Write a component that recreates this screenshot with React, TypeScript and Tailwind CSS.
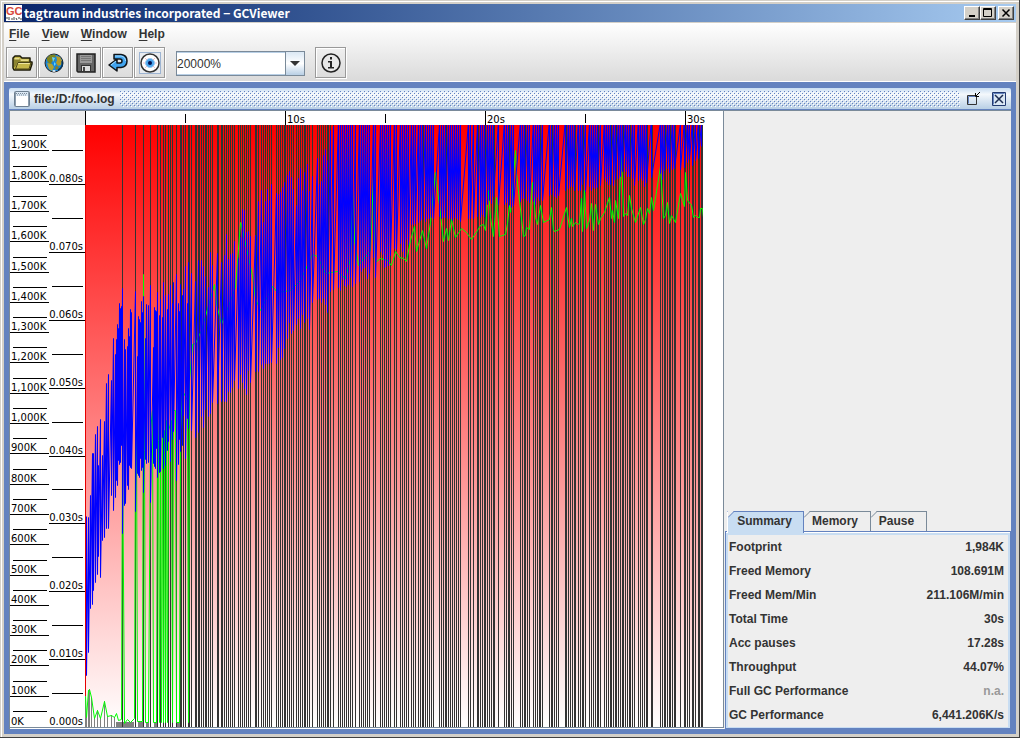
import React, { useState } from "react";

type Point = [number, number];

// x position of every collection that stopped the application, [x, width]
const pauses: Point[] = [
  [122, 1], [135, 1], [143, 1], [150, 1], [157, 1], [160, 1], [163, 1], [165, 1], [168, 1], [170, 1], [172, 1], [176, 1],
  [180, 2], [183, 1], [185, 1], [188, 2], [191, 1], [195, 2], [198, 2], [201, 1], [203, 1], [205, 2], [208, 1], [210, 1], [212, 1],
  [217, 2], [221, 2], [224, 1], [226, 1], [228, 1], [230, 1], [232, 1], [234, 1], [238, 1], [240, 1], [242, 1], [244, 1], [246, 1], [248, 1], [250, 1],
  [255, 2], [258, 1], [261, 1], [263, 1], [265, 1], [267, 1], [269, 1], [271, 1], [276, 1], [278, 1], [280, 1], [282, 1], [284, 2], [287, 1], [289, 1], [291, 1], [293, 1],
  [296, 1], [298, 1], [300, 1], [302, 1], [304, 2], [307, 1], [309, 1], [312, 1], [317, 1], [319, 1], [321, 1], [323, 1], [325, 1], [327, 2], [330, 1], [333, 1],
  [338, 1], [340, 1], [342, 1], [344, 1], [346, 1], [348, 1], [350, 1], [352, 1], [355, 1], [359, 1], [361, 1], [363, 1], [365, 1], [367, 1], [369, 1], [373, 1], [375, 1],
  [380, 1], [382, 1], [384, 1], [386, 1], [388, 1], [390, 1], [394, 1], [396, 1], [400, 1], [402, 1], [404, 1], [406, 1], [408, 1], [411, 1], [413, 1], [415, 1],
  [418, 1], [420, 1], [422, 2], [425, 1], [427, 1], [429, 1], [431, 1], [433, 1], [439, 1], [441, 1], [443, 1], [445, 2], [448, 1], [450, 1], [452, 1], [454, 1], [456, 1], [458, 1], [460, 1],
  [468, 1], [470, 1], [473, 1], [477, 2], [480, 1], [482, 1], [484, 2], [487, 1], [489, 1], [491, 1], [493, 2], [498, 1], [504, 1], [506, 1], [508, 2], [511, 1], [513, 1],
  [520, 1], [522, 1], [524, 2], [527, 1], [529, 1], [533, 1], [535, 1], [537, 1], [539, 2], [542, 1], [549, 1], [551, 2], [554, 1], [556, 1], [558, 1],
  [565, 2], [568, 1], [570, 1], [572, 1], [574, 2], [578, 1], [580, 1], [582, 2], [585, 1], [589, 1], [591, 1], [593, 1], [595, 1], [597, 2], [600, 1],
  [604, 1], [606, 1], [608, 1], [610, 2], [613, 1], [615, 2], [618, 1], [620, 1], [622, 2], [625, 1], [627, 1], [629, 2], [632, 1], [634, 1],
  [638, 1], [640, 1], [642, 1], [644, 1], [646, 2], [651, 2], [660, 1], [662, 1], [664, 2], [667, 1], [669, 2], [672, 1], [674, 2],
  [680, 1], [684, 2], [687, 1], [689, 1], [692, 2], [695, 1], [698, 2], [701, 2],
];

// [x, heap before, heap after] while the heap is still growing
const warmup: [number, number, number][] = [
  [86, 516, 675], [88, 517, 652], [90, 495, 608], [92, 453, 604], [93, 453, 590], [95, 434, 582], [97, 426, 574], [98, 465, 556],
  [100, 419, 577], [102, 455, 540], [104, 421, 537], [106, 383, 528], [108, 374, 528], [111, 380, 495], [113, 338, 510], [115, 354, 497],
  [116, 339, 480], [117, 324, 485], [118, 328, 460], [119, 303, 464], [120, 308, 462], [121, 306, 445], [122, 288, 533],
  [124, 339, 505], [125, 349, 503], [127, 346, 485], [128, 328, 489], [129, 336, 465], [130, 309, 467], [131, 312, 468],
  [135, 291, 511], [137, 356, 473], [138, 316, 475], [139, 319, 477], [140, 322, 458], [141, 301, 470], [142, 312, 467], [143, 296, 492],
  [145, 338, 459], [146, 304, 463], [148, 305, 462], [150, 285, 502], [153, 347, 463], [154, 307, 466], [155, 310, 468], [156, 311, 448],
  [157, 292, 477], [159, 315, 472], [160, 299, 471], [162, 317, 437], [163, 282, 468], [165, 295, 465], [167, 309, 450], [168, 294, 441],
  [170, 285, 461], [172, 303, 439], [173, 282, 431], [176, 274, 480], [178, 303, 464], [179, 311, 439],
  [180, 284, 451], [182, 295, 445], [183, 289, 415], [185, 266, 458], [187, 303, 418], [188, 262, 428],
];

const heapTop: Point[] = [
  [190, 268], [196, 255], [208, 250], [212, 234], [218, 251], [230, 222], [238, 234], [242, 190], [248, 210], [262, 187], [270, 174],
  [280, 178], [290, 155], [297, 170], [305, 148], [312, 160], [320, 148], [330, 126], [335, 118], [440, 120], [600, 118], [702, 118],
];

const heapBottom: Point[] = [
  [190, 430], [196, 453], [203, 434], [213, 408], [221, 421], [232, 397], [245, 396], [262, 378], [282, 366], [293, 334], [304, 337],
  [310, 330], [316, 312], [325, 322], [333, 310], [340, 295], [355, 295], [363, 291], [370, 281], [383, 273], [397, 263], [408, 259],
  [411, 226], [433, 219], [461, 221], [473, 221], [485, 217], [493, 202], [505, 211], [525, 207], [540, 203], [553, 200], [563, 193],
  [593, 194], [602, 186], [610, 189], [620, 178], [633, 186], [653, 186], [661, 181], [675, 172], [683, 173], [690, 168], [698, 167], [702, 152],
];

// duration of each collection
const gcTimes: Point[] = [
  [85, 696], [86, 717], [88, 690], [89, 689], [91, 697], [94, 718], [97, 710], [100, 718], [104, 701], [107, 716], [111, 715], [114, 717],
  [116, 713], [118, 720], [121, 719], [122, 440], [124, 723], [127, 719], [130, 722], [134, 718], [135, 430], [136, 430], [137, 721],
  [142, 721], [143, 274], [144, 450], [145, 722], [148, 722], [150, 430], [152, 410], [153, 722], [156, 722], [157, 420], [158, 440], [159, 722],
  [160, 430], [161, 722], [162, 430], [163, 722], [164, 430], [165, 722], [166, 420], [167, 722], [168, 430], [171, 420], [172, 722], [173, 410],
  [175, 410], [176, 722], [179, 722], [180, 430], [182, 390], [187, 400], [188, 722], [189, 380], [192, 344], [195, 343], [201, 330],
  [214, 284], [216, 303], [221, 324], [235, 287], [240, 222], [241, 225], [252, 275], [255, 298], [260, 310], [272, 286], [277, 292],
  [290, 290], [300, 280], [312, 254], [317, 256], [325, 273], [337, 271], [345, 278], [350, 258], [352, 190], [354, 240], [358, 265], [370, 250],
  [373, 175], [375, 262], [380, 258], [387, 260], [391, 265], [395, 251], [399, 257], [403, 258], [406, 261], [410, 240], [414, 226],
  [416, 251], [422, 230], [426, 248], [430, 222], [432, 200], [435, 172], [437, 190], [439, 205], [443, 241], [446, 228], [448, 240],
  [451, 219], [455, 237], [461, 228], [466, 232], [471, 239], [477, 230], [480, 225], [483, 224], [485, 230], [488, 190], [490, 217],
  [493, 236], [496, 197], [499, 236], [505, 234], [507, 223], [509, 205], [510, 212], [511, 203], [515, 150], [516, 173], [523, 236],
  [525, 235], [526, 227], [529, 229], [532, 182], [535, 217], [537, 224], [540, 205], [543, 222], [549, 219], [551, 207], [553, 229],
  [554, 231], [559, 229], [566, 207], [569, 227], [571, 218], [572, 226], [575, 222], [577, 224], [579, 223], [581, 198], [582, 231],
  [584, 190], [586, 228], [589, 220], [591, 203], [593, 230], [595, 204], [598, 224], [600, 218], [604, 212], [609, 197], [611, 218],
  [612, 210], [614, 222], [615, 200], [618, 218], [621, 150], [623, 216], [625, 213], [627, 215], [629, 195], [631, 208], [635, 222],
  [640, 207], [643, 224], [645, 219], [647, 208], [649, 213], [651, 197], [653, 210], [660, 166], [663, 218], [665, 215], [667, 202],
  [669, 223], [671, 215], [675, 222], [680, 193], [684, 206], [685, 172], [687, 200], [691, 205], [693, 217], [695, 215], [697, 217],
  [699, 217], [700, 208], [702, 208], [703, 217],
];

const valueAt = (points: Point[], x: number) => {
  const i = points.findIndex((p) => p[0] >= x);
  if (i < 0) return points[points.length - 1][1];
  if (i === 0) return points[0][1];
  const [x0, y0] = points[i - 1];
  const [x1, y1] = points[i];
  return y0 + ((y1 - y0) * (x - x0)) / (x1 - x0);
};

const jitter = (n: number) => {
  const s = Math.sin(n * 12.9898) * 43758.5453;
  return s - Math.floor(s);
};

const heapPath = () => {
  const points: string[] = [];
  warmup.forEach(([x, top, bottom]) => points.push(`${x},${top}`, `${x},${bottom}`));
  pauses
    .filter(([x]) => x > 189)
    .forEach(([x]) => {
      const spread = x < 330 ? 38 : 5;
      const top = valueAt(heapTop, x) + jitter(x) * spread;
      const bottom = valueAt(heapBottom, x) - jitter(x + 7) * (x < 410 ? 24 : x < 485 ? 4 : 10);
      points.push(`${x},${Math.round(top)}`, `${x},${Math.round(bottom)}`);
    });
  return points.join(" ");
};

const memoryTicks = Array.from({ length: 20 }, (_, i) => ({
  y: Math.round(726 - i * 30.3),
  label: i === 0 ? "0K" : `${(i * 100).toLocaleString("en-US")}K`,
}));

const timeTicks = Array.from({ length: 9 }, (_, i) => ({
  y: Math.round(727 - i * 67.85),
  label: `0.0${i}0s`,
}));

const Chart = () => (
  <svg width="713" height="616" viewBox="10 111 713 616" className="block shrink-0" role="img" aria-label="Heap usage and pauses">
    <defs>
      <linearGradient id="load" x1="0" y1="0" x2="0" y2="1">
        <stop offset="0" stopColor="#ff0000" />
        <stop offset="1" stopColor="#ffffff" />
      </linearGradient>
      <clipPath id="plot">
        <rect x="85" y="125" width="618" height="602" />
      </clipPath>
    </defs>
    <rect x="10" y="111" width="713" height="616" fill="#fff" />
    <rect x="10" y="111" width="75" height="14" fill="#eee" />

    <g fill="#000" fontFamily="'DejaVu Sans', sans-serif" fontSize="10">
      {memoryTicks.map(({ y, label }, i) => (
        <g key={label}>
          {i > 0 && <rect x="10" y={y} width="39" height="1" />}
          <rect x="13" y={y - 15} width="34" height="1" />
          <text x="11" y={i > 0 ? y - 2 : y - 1}>{label}</text>
        </g>
      ))}
      {timeTicks.map(({ y, label }, i) => (
        <g key={label}>
          {i > 0 && <rect x="49" y={y} width="36" height="1" />}
          <rect x="52" y={y - 34} width="31" height="1" />
          <text x="83" y={y - 2} textAnchor="end">{label}</text>
        </g>
      ))}
      {[85, 285, 485, 685].map((x, i) => (
        <g key={x}>
          <rect x={x} y="111" width="1" height="14" />
          {i > 0 && <text x={x + 2} y="123">{`${i}0s`}</text>}
          {i < 3 && <rect x={x + 100} y="114" width="1" height="9" />}
        </g>
      ))}
    </g>

    <g clipPath="url(#plot)">
      <rect x="85" y="125" width="618" height="602" fill="url(#load)" />
      <rect x="85" y="125" width="1" height="571" fill="#e60000" />
      {gcTimes
        .filter(([x]) => x < 122)
        .map(([x]) => x)
        .concat([123, 125, 128, 131, 138, 141, 146, 154, 177])
        .map((x) => (
          <rect key={x} x={x} y={x < 116 ? valueAt(gcTimes, x) : 722} width={x < 116 ? 1 : 3} height="40" fill="#808080" />
        ))}
      {pauses.map(([x, width]) => (
        <rect key={x} x={x} y="125" width={width} height="602" fill="#333" />
      ))}
      <g transform="translate(0.5 0.5)" fill="none">
        <polyline points={gcTimes.map((p) => p.join(",")).join(" ")} stroke="#00ff00" strokeLinejoin="bevel" />
        <polyline points={heapPath()} stroke="#0000ff" strokeLinejoin="bevel" />
      </g>
    </g>
  </svg>
);

const FolderIcon = () => (
  <svg width="22" height="18" viewBox="0 0 22 18" aria-hidden="true">
    <path d="M2 4l2-2h5l2 2h8v4h2v2l-2 6H3l-1-2z" fill="#c6b84a" stroke="#1c1a08" strokeWidth="1.500" strokeLinejoin="round" />
    <path d="M3 4.500h6l1 2h8V8H7l-3 5H3z" fill="#8c8430" />
    <path d="M3.500 4h5v1.500h-5zM9 5.500h8.500V7H10z" fill="#e6dc8c" />
    <path d="M7 8.500h13l-2 6.500H4.500z" fill="#c6b84a" stroke="#4a4418" />
    <path d="M7.500 9h11.500l-.5 1H7z" fill="#efe7a0" />
  </svg>
);

const GlobeIcon = () => (
  <svg width="20" height="20" viewBox="0 0 20 20" aria-hidden="true">
    <circle cx="10" cy="10" r="9" fill="#1a86d8" stroke="#202428" />
    <path d="M3 5l3-3 5-.5 1 2-2 1 1 3-3 1-1 3-2-1-2-3z" fill="#7d8420" />
    <path d="M12 3l4 1 2 4-1 4-3 1-2-3 1-3z" fill="#b59a28" />
    <path d="M3 10l5 1 2 3-2 4-3-2z" fill="#b0a235" />
    <path d="M12 13l3 1-2 3-2-1z" fill="#8c7d20" />
    <path d="M8 4l3 1-2 4zM10 9l2 2-2 2z" fill="#63d2ff" />
    <path d="M14 17a8 8 0 0 0 4-9" fill="none" stroke="#06355d" strokeWidth="1.500" />
    <path d="M8 18l2-1 2 1-2 1z" fill="#fff" />
  </svg>
);

const SaveIcon = () => (
  <svg width="20" height="20" viewBox="0 0 20 20" aria-hidden="true">
    <path d="M1 1h18v18H2l-1-1z" fill="#666" stroke="#222" strokeWidth="1.500" />
    <path d="M4 2h12v8H4z" fill="#9a9a9a" />
    <path d="M5 3h10v1H5zM5 5h10v1H5zM5 7h10v1H5z" fill="#777" />
    <path d="M5 12h10v7H5z" fill="#333" />
    <path d="M6 13h8v5H6z" fill="#ddd" />
    <path d="M7 14h2v4H7z" fill="#444" />
  </svg>
);

const ReloadIcon = () => (
  <svg width="20" height="20" viewBox="0 0 20 20" aria-hidden="true">
    <path d="M6 1.500h7q6 .5 6 6.500t-6 6.500H9V18l-8-6 8-6v4h3q2 0 2-2t-2-2H6z" fill="#42a5ef" stroke="#101418" strokeWidth="1.500" strokeLinejoin="round" />
    <path d="M7 3h6q4.500 1 4.500 5M3 12l5-4" fill="none" stroke="#a5dcff" />
  </svg>
);

const EyeIcon = () => (
  <svg width="22" height="22" viewBox="0 0 22 22" aria-hidden="true">
    <rect x=".5" y=".5" width="21" height="21" fill="#e8ebf0" stroke="#9db4d2" />
    <circle cx="11" cy="11" r="9" fill="#fff" stroke="#333" strokeWidth="1.500" />
    <path d="M6 6l2 2M16 6l-2 2M6 16l2-2M16 16l-2-2M4 11h2M16 11h2" stroke="#f4bcc8" />
    <circle cx="11" cy="11" r="4.500" fill="#4da6ed" stroke="#9cc8f0" />
    <circle cx="11" cy="11" r="2" fill="#001050" />
  </svg>
);

const InfoIcon = () => (
  <svg width="20" height="20" viewBox="0 0 20 20" aria-hidden="true">
    <circle cx="10" cy="10" r="9" fill="#e8e8e8" stroke="#222" strokeWidth="1.500" />
    <path d="M9 4h2v2.500H9zM7 8h4v6h2v1.500H7V14h2V9.500H7z" fill="#222" />
  </svg>
);

const ToolButton = ({ label, children }: { label: string; children: React.ReactNode }) => (
  <button
    aria-label={label}
    className="flex h-[31px] w-[31px] items-center justify-center border border-[#999] shadow-[inset_1px_1px_0_#fff,1px_1px_0_#fff]"
  >
    {children}
  </button>
);

const WindowButton = ({ label, children }: { label: string; children: React.ReactNode }) => (
  <button
    aria-label={label}
    className="flex h-[14px] w-4 items-center justify-center border border-t-white border-l-white border-r-[#404040] border-b-[#404040] bg-[#d4d0c8] shadow-[inset_-1px_-1px_0_#808080]"
  >
    {children}
  </button>
);

const tabs = [
  { name: "Summary", width: "w-[77px]" },
  { name: "Memory", width: "w-[67px]" },
  { name: "Pause", width: "w-[56px]" },
];

const summary = [
  ["Footprint", "1,984K"],
  ["Freed Memory", "108.691M"],
  ["Freed Mem/Min", "211.106M/min"],
  ["Total Time", "30s"],
  ["Acc pauses", "17.28s"],
  ["Throughput", "44.07%"],
  ["Full GC Performance", "n.a."],
  ["GC Performance", "6,441.206K/s"],
];

const Sidebar = () => {
  const [active, setActive] = useState("Summary");

  return (
    <aside className="ml-px flex flex-1 flex-col justify-end bg-[#eee]">
      <div role="tablist" className="flex h-5 items-start pl-0.5">
        {tabs.map(({ name, width }) => {
          const selected = name === active;
          return (
            <button
              key={name}
              role="tab"
              aria-selected={selected}
              onClick={() => setActive(name)}
              className={`relative shrink-0 border-t border-r font-bold ${width} ${
                selected ? "z-10 h-[22px] border-[#6382bf] border-l border-l-white bg-[#c8ddf2] pr-0.5 pb-[3px]" : "h-5 border-[#7a8a99] bg-[#eee] pr-1 pb-px"
              }`}
            >
              <svg width="7" height="7" viewBox="0 0 7 7" className="absolute -top-px left-0" aria-hidden="true">
                <path d="M0 0h6L0 6z" fill="#eee" />
                <path d="M0 6.500L6.500 0" stroke={selected ? "#6382bf" : "#7a8a99"} />
              </svg>
              {name}
            </button>
          );
        })}
      </div>
      <div role="tabpanel" className="border border-[#6382bf] bg-[#c8ddf2] px-0.5 pt-[3px] pb-px shadow-[inset_0_1px_0_#fff]">
        <table className="w-full bg-[#eee] font-bold">
          <tbody>
            {summary.map(([label, value]) => (
              <tr key={label} className="h-6">
                <th scope="row" className="pl-px text-left">{label}</th>
                <td className={`pr-1 text-right ${value === "n.a." ? "text-[#999]" : ""}`}>{value}</td>
              </tr>
            ))}
          </tbody>
        </table>
      </div>
    </aside>
  );
};

const App = () => {
  return (
    <div className="flex min-h-screen flex-col border-r border-b border-[#404040] bg-[#d4d0c8] p-1 pr-[3px] pb-[3px] font-['Liberation_Sans',Arial,sans-serif] text-[12px] leading-4 text-[#333] shadow-[inset_1px_1px_0_#d4d0c8,inset_2px_2px_0_#fff]">
      <header className="flex h-[18px] items-center bg-linear-to-r from-[#0a246a] to-[#a6caf0] px-0.5">
        <svg width="16" height="16" viewBox="0 0 16 16" aria-hidden="true">
          <rect width="16" height="16" fill="#fff" />
          <text x="0" y="10" fontSize="11" fontWeight="bold" fill="#d8483c" fontFamily="'Liberation Sans', sans-serif">GC</text>
          <path d="M1 12v2M3 12v3M5 14h2M8 12v3M10 13l1 2M13 12v2M14 14h2" stroke="#444" />
        </svg>
        <h1 className="ml-0.5 flex-1 font-['Noto_Sans_CJK_JP',sans-serif] text-[12px] font-bold whitespace-pre text-white">
          tagtraum industries incorporated − GCViewer
        </h1>
        <WindowButton label="Minimize">
          <svg width="12" height="10" viewBox="0 0 12 10"><path d="M3 7h6v2H3z" /></svg>
        </WindowButton>
        <WindowButton label="Maximize">
          <svg width="12" height="10" viewBox="0 0 12 10"><path d="M1.500 .5h8v8h-8zM1 1.500h9" fill="none" stroke="#000" /></svg>
        </WindowButton>
        <span className="w-0.5" />
        <WindowButton label="Close">
          <svg width="12" height="10" viewBox="0 0 12 10"><path d="M2.500 1.500l7 7M9.500 1.500l-7 7" stroke="#000" strokeWidth="1.500" /></svg>
        </WindowButton>
      </header>

      <div className="mt-px border-b border-white bg-linear-to-b from-white to-[#dadada]">
        <nav className="flex h-[23px] items-center gap-3 pb-0.5 pl-[5px] font-bold">
          {["File", "View", "Window", "Help"].map((item) => (
            <button key={item}>
              <u className="underline-offset-2">{item[0]}</u>
              {item.slice(1)}
            </button>
          ))}
        </nav>
        <div className="flex items-start gap-px pt-px pb-[3px] pl-0.5">
          <ToolButton label="Open file"><FolderIcon /></ToolButton>
          <ToolButton label="Open URL"><GlobeIcon /></ToolButton>
          <ToolButton label="Export"><SaveIcon /></ToolButton>
          <ToolButton label="Refresh"><ReloadIcon /></ToolButton>
          <ToolButton label="Watch"><EyeIcon /></ToolButton>
          <div className="relative mt-1 mr-[9px] ml-2.5 h-[25px] w-[129px]">
            <select
              aria-label="Zoom"
              defaultValue="20000%"
              className="h-full w-full appearance-none border border-[#7a8a99] bg-white pr-6 text-[12px] shadow-[inset_-1px_-1px_0_#b8cfe5,inset_0_1px_0_#b8cfe5]"
            >
              <option>20000%</option>
              <option>10000%</option>
              <option>5000%</option>
              <option>1000%</option>
            </select>
            <span className="pointer-events-none absolute top-0 right-0 flex h-full w-5 items-center justify-center border border-[#7a8a99] bg-linear-to-b from-[#dbe8f4] via-white to-[#b8cfe5]">
              <svg width="10" height="5" viewBox="0 0 10 5"><path d="M0 0h10L5 5z" fill="#333" /></svg>
            </span>
          </div>
          <ToolButton label="About"><InfoIcon /></ToolButton>
        </div>
      </div>

      <main className="flex flex-1 flex-col bg-[#6382bf] p-[5px] pt-1.5">
        <div className="flex h-[21px] items-center gap-[5px] rounded-t-[2px] bg-linear-to-b from-[#c8ddf2] via-[#f4f8fc] via-30% to-[#b8cfe5] pr-1 pl-[5px]">
          <svg width="16" height="16" viewBox="0 0 16 16" aria-hidden="true">
            <rect x=".5" y=".5" width="15" height="15" rx="1" fill="#fff" stroke="#6d7f90" />
            <path d="M1 1h14v4H1z" fill="#dbe8f4" />
            <path d="M2 2.500h12M3 4h10" stroke="#7a8a99" strokeDasharray="1 1" />
            <path d="M1.500 1v14M14.500 1v14" stroke="#8c9cac" />
          </svg>
          <h2 className="-ml-px font-bold">file:/D:/foo.log</h2>
          <svg className="h-4 flex-1" aria-hidden="true">
            <defs>
              <pattern id="bumps" width="4" height="4" patternUnits="userSpaceOnUse">
                <path d="M0 0h1v1H0zM2 2h1v1H2z" fill="#6382bf" />
                <path d="M1 1h1v1H1zM3 3h1v1H3z" fill="#fff" />
              </pattern>
            </defs>
            <rect width="100%" height="16" fill="url(#bumps)" />
          </svg>
          <button aria-label="Restore">
            <svg width="16" height="16" viewBox="0 0 16 16">
              <path d="M2.500 4.500h9v9h-9z" fill="none" stroke="#333" />
              <path d="M3.500 12.500v-7h7" fill="none" stroke="#6382bf" />
              <path d="M15 1l-4 4M10.500 2v3.500H14" fill="none" stroke="#000" />
            </svg>
          </button>
          <button aria-label="Close file" className="ml-[5px]">
            <svg width="16" height="16" viewBox="0 0 16 16">
              <path d="M1.500 1.500h13v13h-13z" fill="#dbe8f4" stroke="#223a70" />
              <path d="M2.500 13.500v-11h11" fill="none" stroke="#6382bf" />
              <path d="M4 4l8 8M12 4l-8 8" stroke="#1c2c50" strokeWidth="1.500" />
            </svg>
          </button>
        </div>
        <div className="mt-px flex flex-1 items-stretch border-t border-l border-[#7a8a99] bg-[#eee]">
          <div className="self-start border-r border-b border-[#7a8a99] shadow-[0_1px_0_#fff]">
            <Chart />
          </div>
          <Sidebar />
        </div>
      </main>
    </div>
  );
};

export default App;
